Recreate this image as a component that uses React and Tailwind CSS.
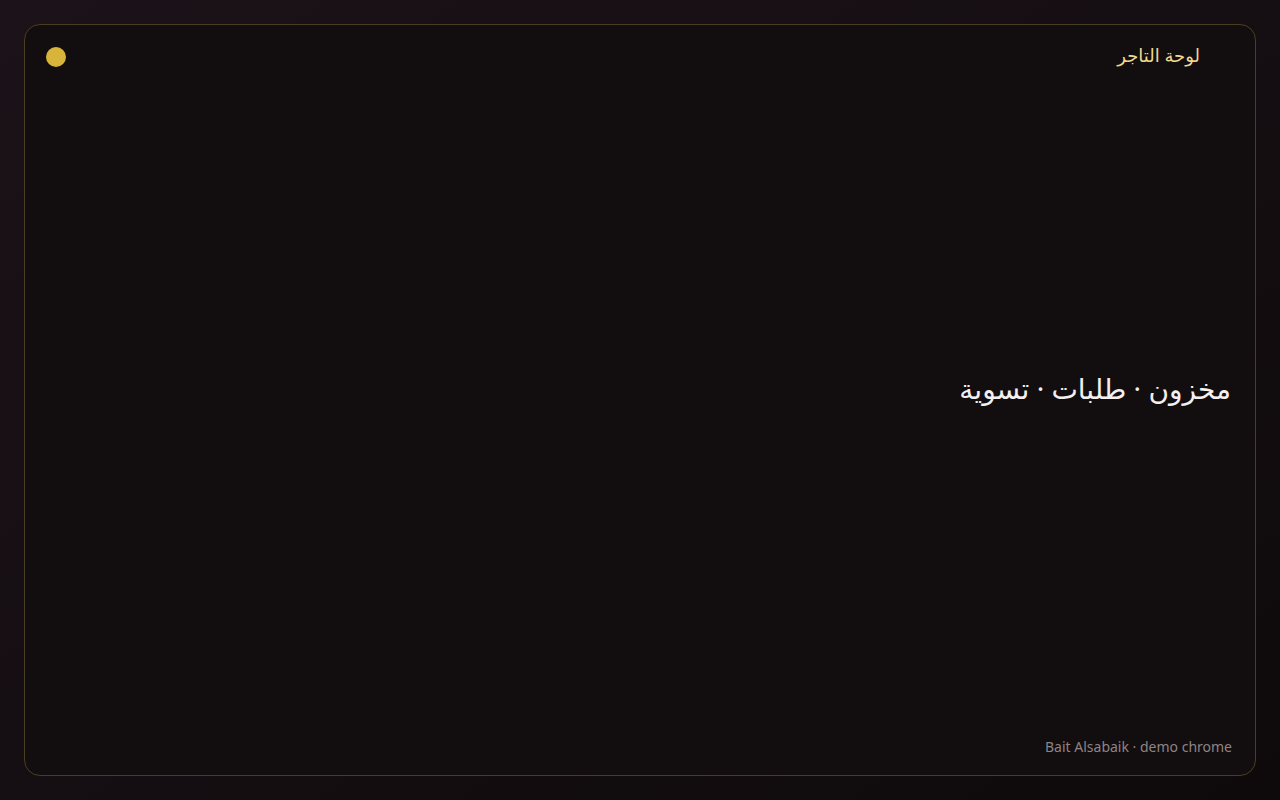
export default function App() {
  return (
    <div
      className="min-h-screen w-full bg-gradient-to-br from-[#1c1219] to-[#0e0a0b] p-6"
      style={{ fontFamily: '"Noto Sans", "DejaVu Sans", sans-serif' }}
    >
      <div
        dir="rtl"
        className="flex h-[752px] flex-col rounded-2xl border border-[#4a3e22] bg-[#120d0f]"
      >
        {/* header */}
        <div className="flex items-center justify-between pt-[22px] pr-[55px] pl-[21px] pb-[22px]">
          <span className="-mt-1 text-lg leading-5 text-[#f0d98e]">لوحة التاجر</span>
          <span className="h-5 w-5 rounded-full bg-[#d8b53a]" />
        </div>

        {/* body */}
        <div className="flex flex-1 items-center px-6 pb-[50px]">
          <h1 className="text-[28px] leading-9 text-[#f5f0f0]">
            مخزون · طلبات · تسوية
          </h1>
        </div>

        {/* footer */}
        <div className="pr-[23px] pl-6 pb-[18px]">
          <p dir="ltr" className="text-right text-sm leading-5 text-[#8e8484]">
            Bait Alsabaik · demo chrome
          </p>
        </div>
      </div>
    </div>
  );
}
